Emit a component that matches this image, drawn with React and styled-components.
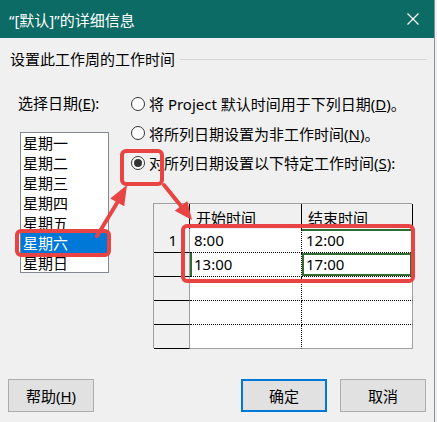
import React from 'react'
import styled, { createGlobalStyle } from 'styled-components'

const GlobalStyle = createGlobalStyle`
  html, body {
    margin: 0;
    padding: 0;
    background: #f0f0f0;
  }
  body {
    font-family: "Noto Sans", "Noto Sans CJK SC", sans-serif;
    font-size: 15px;
    color: #000;
  }
`

const Window = styled.div`
  position: relative;
  box-sizing: border-box;
  width: 435px;
  height: 422px;
  border-right: 1px solid #7d9599;
  background: #f0f0f0;
  display: flex;
  flex-direction: column;
  overflow: hidden;
`

const TitleBar = styled.div`
  height: 38px;
  background: #0c6b65;
  color: #fff;
  display: flex;
  align-items: center;
  justify-content: space-between;
  padding: 0 15px 0 9px;
`

const Title = styled.div`
  font-size: 15px;
  line-height: 20px;
  padding-top: 2px;
`

const GroupHeader = styled.div`
  margin-top: 11px;
  height: 21px;
  display: flex;
  align-items: center;
  padding: 0 7px 0 10px;
  gap: 5px;
  line-height: 21px;
`

const Rule = styled.div`
  flex: 1;
  height: 1px;
  background: #d5d5d5;
`

const Main = styled.div`
  display: flex;
`

const DayColumn = styled.div`
  width: 113px;
  margin-left: 18px;
  padding-top: 23px;
`

const Label = styled.div`
  line-height: 20px;
  height: 20px;
  white-space: nowrap;
`

const DayList = styled.div`
  box-sizing: border-box;
  width: 89px;
  height: 141px;
  margin: 19px 0 0 2px;
  border: 1px solid #828790;
  background: #fff;
`

const DayItem = styled.div`
  height: 20px;
  line-height: 20px;
  padding-left: 2px;
  background: ${p => (p.$selected ? '#0078d7' : 'transparent')};
  color: ${p => (p.$selected ? '#fff' : '#000')};
`

const OptionColumn = styled.div`
  padding-top: 19px;
`

const RadioRow = styled.div`
  height: 29.5px;
  display: flex;
  align-items: center;
  gap: 4px;
  white-space: nowrap;
`

const Radio = styled.span`
  box-sizing: border-box;
  width: 14px;
  height: 14px;
  border-radius: 50%;
  border: 1px solid #333;
  background: #fff;
  display: flex;
  align-items: center;
  justify-content: center;
  &::after {
    content: '';
    width: 8px;
    height: 8px;
    border-radius: 50%;
    background: ${p => (p.$checked ? '#333' : 'transparent')};
  }
`

const TimeTable = styled.div`
  box-sizing: border-box;
  margin: 25.5px 0 0 22px;
  width: 259px;
  height: 145px;
  display: grid;
  grid-template-columns: 36px 112px 111px;
  grid-template-rows: 25px repeat(5, 24px);
  border-top: 1px solid #a0a0a0;
  border-left: 1px solid #a0a0a0;
`

const HeadCell = styled.div`
  box-sizing: border-box;
  background: #f0f0f0;
  border-right: 1px solid #000;
  padding: 4px 0 0 6px;
  line-height: 20px;
`

const NumCell = styled.div`
  box-sizing: border-box;
  background: #f0f0f0;
  border-bottom: 1px solid #000;
  border-right: 1px solid #a0a0a0;
  line-height: 23px;
  text-align: right;
  padding-right: 12px;
`

const DataCell = styled.div`
  box-sizing: border-box;
  background: #fff;
  border-bottom: ${p => (p.$last ? '1px solid #a0a0a0' : '1px dotted #000')};
  border-right: ${p => (p.$col === 0 ? '1px dotted #000' : '1px solid #a0a0a0')};
  line-height: 23px;
  padding-left: 4px;
  box-shadow: ${p => p.$focus || 'none'};
`

const Footer = styled.div`
  margin-top: auto;
  display: flex;
  padding: 0 8px 10px 8px;
`

const Button = styled.button`
  box-sizing: border-box;
  width: 86px;
  height: 33px;
  font-family: inherit;
  font-size: 15px;
  color: #000;
  background: #e1e1e1;
  border: ${p => (p.$primary ? '2px solid #0078d7' : '1px solid #adadad')};
  padding: 0;
  margin-left: ${p => p.$gap || '0'};
`

const Overlay = styled.svg`
  position: absolute;
  left: 0;
  top: 0;
  pointer-events: none;
`

const CloseIcon = () => (
  <svg width="12" height="12" viewBox="0 0 12 12">
    <path d="M0.5 0.5 L11.5 11.5 M11.5 0.5 L0.5 11.5" stroke="#fff" strokeWidth="1.2" />
  </svg>
)

const days = ['星期一', '星期二', '星期三', '星期四', '星期五', '星期六', '星期日']
const rows = [
  ['1', '8:00', '12:00'],
  ['', '13:00', '17:00'],
  ['', '', ''],
  ['', '', ''],
  ['', '', ''],
]
const green = '#2f6d31'
const focus = {
  '0-1': `inset 0 2px 0 ${green}`,
  '1-0': `inset 2px 0 0 ${green}`,
  '1-1': `inset 0 0 0 2px ${green}`,
}

const RED = '#e84444'

const App = () => {
  return (
    <>
      <GlobalStyle />
      <Window>
        <TitleBar>
          <Title>“[默认]”的详细信息</Title>
          <CloseIcon />
        </TitleBar>
        <GroupHeader>
          <span>设置此工作周的工作时间</span>
          <Rule />
        </GroupHeader>
        <Main>
          <DayColumn>
            <Label>选择日期(<u>E</u>):</Label>
            <DayList>
              {days.map(d => (
                <DayItem key={d} $selected={d === '星期六'}>{d}</DayItem>
              ))}
            </DayList>
          </DayColumn>
          <OptionColumn>
            <RadioRow><Radio /><span>将 Project 默认时间用于下列日期(<u>D</u>)。</span></RadioRow>
            <RadioRow><Radio /><span>将所列日期设置为非工作时间(<u>N</u>)。</span></RadioRow>
            <RadioRow><Radio $checked /><span>对所列日期设置以下特定工作时间(<u>S</u>):</span></RadioRow>
            <TimeTable>
              <HeadCell />
              <HeadCell>开始时间</HeadCell>
              <HeadCell>结束时间</HeadCell>
              {rows.map((r, i) => (
                <React.Fragment key={i}>
                  <NumCell>{r[0]}</NumCell>
                  <DataCell $col={0} $last={i === rows.length - 1} $focus={focus[`${i}-0`]}>{r[1]}</DataCell>
                  <DataCell $col={1} $last={i === rows.length - 1} $focus={focus[`${i}-1`]}>{r[2]}</DataCell>
                </React.Fragment>
              ))}
            </TimeTable>
          </OptionColumn>
        </Main>
        <Footer>
          <Button>帮助(<u>H</u>)</Button>
          <Button $primary $gap="147px">确定</Button>
          <Button $gap="13px">取消</Button>
        </Footer>
        <Overlay width="435" height="422" viewBox="0 0 435 422">
          <g fill="none" stroke={RED} strokeWidth="4">
            <rect x="17" y="231" width="92" height="24" rx="4" />
            <rect x="122" y="151" width="40" height="33" rx="4" />
            <rect x="183" y="226" width="230" height="55" rx="4" />
            <line x1="97" y1="236" x2="117" y2="203" strokeLinecap="round" />
            <line x1="164" y1="185" x2="181" y2="206" strokeLinecap="round" />
          </g>
          <g fill={RED}>
            <polygon points="127,185 124.2,206.3 110.2,198.5" />
            <polygon points="192,220 187.3,200.9 174.7,210.7" />
          </g>
        </Overlay>
      </Window>
    </>
  )
}

export default App
